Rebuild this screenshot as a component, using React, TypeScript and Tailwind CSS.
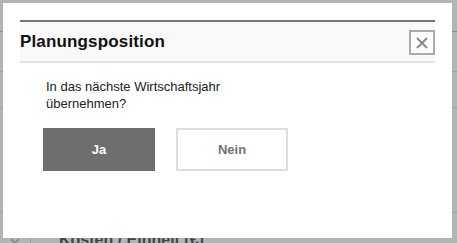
import React from "react";

export default function App() {
  return (
    <div className="relative w-[457px] h-[243px] overflow-hidden bg-[#b4b4b4]" style={{ fontFamily: '"Liberation Sans", Arial, sans-serif' }}>
      {/* underlying page (dimmed) */}
      <div className="flex flex-col">
        <div className="h-[31px]" />
        <div className="h-px bg-[#8a8a8a]" />
        <div className="h-[39px]" />
        <div className="h-px bg-[#a0a0a0]" />
        <div className="h-[35px]" />
        <div className="h-px bg-[#a0a0a0]" />
        <div className="h-[104px]" />
        <div className="h-px bg-[#a0a0a0]" />
        <div className="h-[18px]" />
        <div className="h-[30px] flex items-start">
          <div className="w-[31px] h-full flex justify-center border-r border-[#a0a0a0] pt-[7px]">
            <svg width="10" height="6" viewBox="0 0 10 6"><path d="M1 1 L5 5 L9 1" stroke="#8c8c8c" strokeWidth="2" fill="none" /></svg>
          </div>
          <div className="pl-[28px] text-[16px] font-bold text-[#444] leading-[18px]">Kosten / Einheit [€]</div>
        </div>
      </div>

      {/* dialog */}
      <div className="absolute left-[3px] top-[3px] w-[449px] h-[235px] bg-white pl-[17px] pr-[17px] pt-[17px]">
        <div className="flex items-center justify-between h-[43px] border-t-2 border-b-2 border-t-[#747474] border-b-[#e2e2e2] bg-[#f9f9f9]">
          <div className="text-[17px] font-bold text-[#111] tracking-[0.15px]">Planungsposition</div>
          <div className="w-[26px] h-[25px] border-2 border-[#b0aaa4] bg-white flex items-center justify-center mt-[2px]">
            <svg width="12" height="12" viewBox="0 0 12 12">
              <path d="M1 1 L11 11 M11 1 L1 11" stroke="#8a8a8a" strokeWidth="2" />
            </svg>
          </div>
        </div>
        <div className="ml-[26px] mt-[15px] text-[13px] leading-[17px] text-[#222]">
          In das nächste Wirtschaftsjahr
          <br />
          übernehmen?
        </div>
        <div className="flex ml-[23px] mt-[16px] gap-[21px]">
          <button className="w-[112px] h-[43px] bg-[#6e6e6e] text-white text-[13px] font-bold">Ja</button>
          <button className="w-[112px] h-[43px] bg-white border-2 border-[#dedede] text-[#737373] text-[13px] font-bold">Nein</button>
        </div>
      </div>
    </div>
  );
}
